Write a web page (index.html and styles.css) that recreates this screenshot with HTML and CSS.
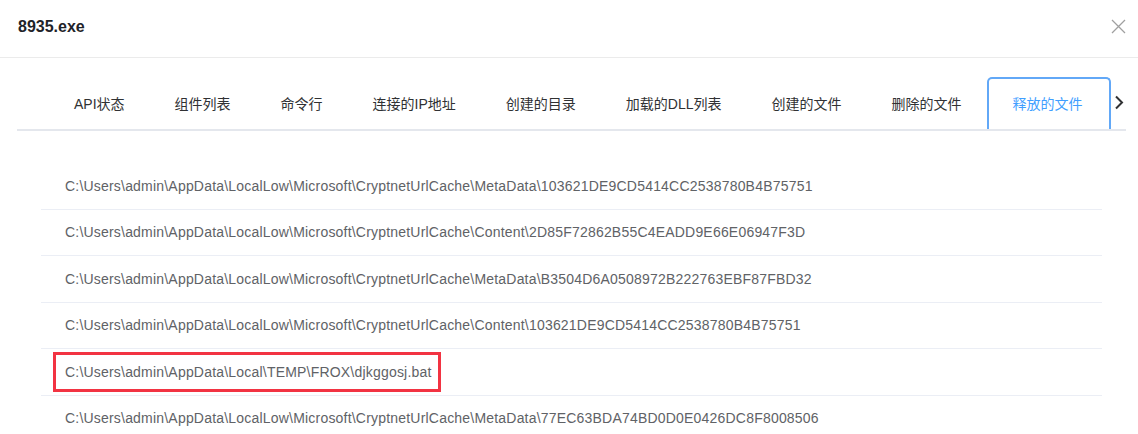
FILE: index.html
```html
<!DOCTYPE html>
<html lang="zh-CN">
<head>
  <meta charset="UTF-8">
  <meta name="viewport" content="width=device-width, initial-scale=1.0">
  <title>8935.exe</title>
  <link rel="stylesheet" href="styles.css">
</head>
<body>
  <div class="dialog">
    <div class="dialog-header">
      <span class="dialog-title">8935.exe</span>
      <span class="dialog-close">
        <svg width="15" height="15" viewBox="0 0 15 15"><path d="M1 1 L14 14 M14 1 L1 14" stroke="#a0a0a0" stroke-width="1.3" fill="none"/></svg>
      </span>
    </div>

    <div class="tabs">
      <div class="tab-list">
        <div class="tab">API状态</div>
        <div class="tab">组件列表</div>
        <div class="tab">命令行</div>
        <div class="tab">连接的IP地址</div>
        <div class="tab">创建的目录</div>
        <div class="tab">加载的DLL列表</div>
        <div class="tab">创建的文件</div>
        <div class="tab">删除的文件</div>
        <div class="tab active">释放的文件</div>
      </div>
      <div class="tab-next">
        <svg width="10" height="15" viewBox="0 0 10 15"><path d="M2 1.5 L8 7.5 L2 13.5" stroke="#303133" stroke-width="2" fill="none"/></svg>
      </div>
    </div>

    <!-- 释放的文件列表 -->
    <div class="file-list">
      <div class="file-row">C:\Users\admin\AppData\LocalLow\Microsoft\CryptnetUrlCache\MetaData\103621DE9CD5414CC2538780B4B75751</div>
      <div class="file-row">C:\Users\admin\AppData\LocalLow\Microsoft\CryptnetUrlCache\Content\2D85F72862B55C4EADD9E66E06947F3D</div>
      <div class="file-row">C:\Users\admin\AppData\LocalLow\Microsoft\CryptnetUrlCache\MetaData\B3504D6A0508972B222763EBF87FBD32</div>
      <div class="file-row">C:\Users\admin\AppData\LocalLow\Microsoft\CryptnetUrlCache\Content\103621DE9CD5414CC2538780B4B75751</div>
      <div class="file-row"><span class="mark">C:\Users\admin\AppData\Local\TEMP\FROX\djkggosj.bat</span></div>
      <div class="file-row">C:\Users\admin\AppData\LocalLow\Microsoft\CryptnetUrlCache\MetaData\77EC63BDA74BD0D0E0426DC8F8008506</div>
    </div>
  </div>
</body>
</html>
```

FILE: styles.css
```css
body {
  margin: 0;
  font-family: "Liberation Sans", Arial, "Noto Sans CJK SC", sans-serif;
  background: #fff;
  overflow: hidden;
}
.dialog-header {
  height: 58px;
  box-sizing: border-box;
  padding: 17px 12px 0 18px;
  border-bottom: 1px solid #ebebeb;
  display: flex;
  justify-content: space-between;
  align-items: flex-start;
}
.dialog-title {
  font-size: 16px;
  font-weight: bold;
  line-height: 20px;
  color: #1f2329;
}
.dialog-close {
  display: block;
  margin-top: 2px;
  width: 15px;
  height: 15px;
}
.dialog-close svg {
  display: block;
}
.tabs {
  display: flex;
  margin: 19px 12px 0 17px;
  border-bottom: 2px solid #e4e7ed;
}
.tab-list {
  flex: 1;
  display: flex;
  padding-left: 32px;
  overflow: hidden;
}
.tab {
  box-sizing: border-box;
  height: 54px;
  margin-bottom: -2px;
  padding: 0 23px 4px;
  border: 2px solid transparent;
  border-bottom: none;
  display: flex;
  align-items: center;
  font-size: 14px;
  color: #303133;
  white-space: nowrap;
}
.tab.active {
  padding: 0 26px 4px 24px;
  color: #409eff;
  border-color: #62a8f7;
  border-radius: 5px 5px 0 0;
  background: #fff;
}
.tab-next {
  width: 15px;
  display: flex;
  align-items: center;
  justify-content: center;
  padding-bottom: 2px;
}
.tab-next svg {
  display: block;
}
.file-list {
  margin: 32px 36px 0 41px;
}
.file-row {
  box-sizing: border-box;
  height: 46.5px;
  padding-left: 24px;
  border-bottom: 1px solid #ebeef5;
  display: flex;
  align-items: center;
  font-size: 14px;
  letter-spacing: 0.2px;
  color: #606266;
  white-space: nowrap;
}
.mark {
  display: inline-block;
  margin-left: -12px;
  padding: 8px 6px 8px 9px;
  line-height: 18px;
  border: 3px solid #f23342;
}
```
